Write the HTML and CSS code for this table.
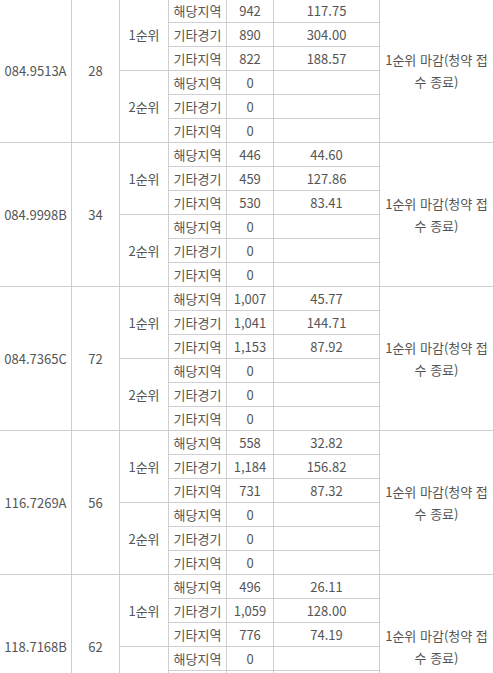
FILE: index.html
```html
<!DOCTYPE html>
<html lang="ko">
<head>
<meta charset="utf-8">
<link rel="stylesheet" href="styles.css">
</head>
<body>
<div class="wrap">
<table class="result">
<colgroup>
<col class="c1"><col class="c2"><col class="c3"><col class="c4"><col class="c5"><col class="c6"><col class="c7">
</colgroup>
<tbody>
<tr><td rowspan="6">084.9513A</td><td rowspan="6">28</td><td rowspan="3">1순위</td><td>해당지역</td><td>942</td><td>117.75</td><td rowspan="6" class="note">1순위 마감(청약 접수 종료)</td></tr>
<tr><td>기타경기</td><td>890</td><td>304.00</td></tr>
<tr><td>기타지역</td><td>822</td><td>188.57</td></tr>
<tr><td rowspan="3">2순위</td><td>해당지역</td><td>0</td><td></td></tr>
<tr><td>기타경기</td><td>0</td><td></td></tr>
<tr><td>기타지역</td><td>0</td><td></td></tr>

<tr><td rowspan="6">084.9998B</td><td rowspan="6">34</td><td rowspan="3">1순위</td><td>해당지역</td><td>446</td><td>44.60</td><td rowspan="6" class="note">1순위 마감(청약 접수 종료)</td></tr>
<tr><td>기타경기</td><td>459</td><td>127.86</td></tr>
<tr><td>기타지역</td><td>530</td><td>83.41</td></tr>
<tr><td rowspan="3">2순위</td><td>해당지역</td><td>0</td><td></td></tr>
<tr><td>기타경기</td><td>0</td><td></td></tr>
<tr><td>기타지역</td><td>0</td><td></td></tr>

<tr><td rowspan="6">084.7365C</td><td rowspan="6">72</td><td rowspan="3">1순위</td><td>해당지역</td><td>1,007</td><td>45.77</td><td rowspan="6" class="note">1순위 마감(청약 접수 종료)</td></tr>
<tr><td>기타경기</td><td>1,041</td><td>144.71</td></tr>
<tr><td>기타지역</td><td>1,153</td><td>87.92</td></tr>
<tr><td rowspan="3">2순위</td><td>해당지역</td><td>0</td><td></td></tr>
<tr><td>기타경기</td><td>0</td><td></td></tr>
<tr><td>기타지역</td><td>0</td><td></td></tr>

<tr><td rowspan="6">116.7269A</td><td rowspan="6">56</td><td rowspan="3">1순위</td><td>해당지역</td><td>558</td><td>32.82</td><td rowspan="6" class="note">1순위 마감(청약 접수 종료)</td></tr>
<tr><td>기타경기</td><td>1,184</td><td>156.82</td></tr>
<tr><td>기타지역</td><td>731</td><td>87.32</td></tr>
<tr><td rowspan="3">2순위</td><td>해당지역</td><td>0</td><td></td></tr>
<tr><td>기타경기</td><td>0</td><td></td></tr>
<tr><td>기타지역</td><td>0</td><td></td></tr>

<tr><td rowspan="6">118.7168B</td><td rowspan="6">62</td><td rowspan="3">1순위</td><td>해당지역</td><td>496</td><td>26.11</td><td rowspan="6" class="note">1순위 마감(청약 접수 종료)</td></tr>
<tr><td>기타경기</td><td>1,059</td><td>128.00</td></tr>
<tr><td>기타지역</td><td>776</td><td>74.19</td></tr>
<tr><td rowspan="3">2순위</td><td>해당지역</td><td>0</td><td></td></tr>
<tr><td>기타경기</td><td>0</td><td></td></tr>
<tr><td>기타지역</td><td>0</td><td></td></tr>
</tbody>
</table>
</div>
</body>
</html>
```
FILE: styles.css
```css
html, body {
  margin: 0;
  padding: 0;
  background: #fff;
}
.wrap {
  width: 494px;
  height: 673px;
  overflow: hidden;
}
.result {
  border-collapse: collapse;
  table-layout: fixed;
  width: 494px;
  margin: -2px 0 0 -1px;
  font-family: "Noto Sans CJK KR", "Noto Sans", sans-serif;
  font-size: 13px;
  color: #555;
}
.result td {
  border: 1px solid #cfcfcf;
  height: 23px;
  padding: 0 3px;
  text-align: center;
  vertical-align: middle;
  line-height: 16px;
  white-space: normal;
}
.c1 { width: 72px; }
.c2 { width: 48px; }
.c3 { width: 49px; }
.c4 { width: 58px; }
.c5 { width: 47px; }
.c6 { width: 106px; }
.c7 { width: 114px; }
.result td.note {
  line-height: 22px;
  padding: 0 3px;
}
```
